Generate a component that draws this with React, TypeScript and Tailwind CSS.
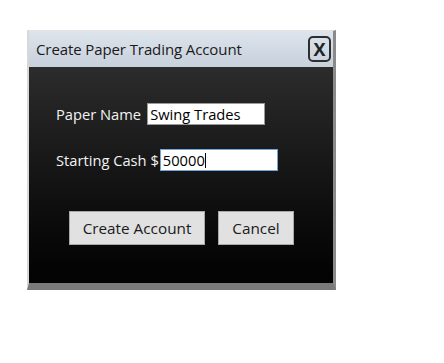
import React from 'react';

const App: React.FC = () => {
  return (
    <div className="w-[444px] h-[363px] bg-white pt-[30px] pl-[27px] font-['Open_Sans',sans-serif]">
      <div className="w-[309px] h-[260px] flex flex-col border-l-2 border-l-[#d8d8d8] border-r-[3px] border-r-[#8a8a8a] border-b-[7px] border-b-[#7a7a7a] border-t border-t-[#e2e2e2]">
        {/* title bar */}
        <div className="h-[36px] flex items-center justify-between pl-[7px] pr-[2px] bg-gradient-to-b from-[#dde4ec] to-[#c7d1dc]">
          <span className="text-[15px] text-[#1a1a1a] tracking-[-0.1px]">Create Paper Trading Account</span>
          <div className="w-[23px] h-[26px] border-2 border-[#2e2e2e] rounded-[5px] flex items-center justify-center text-[18px] font-bold text-[#222] leading-none">
            X
          </div>
        </div>

        {/* body */}
        <div className="flex-1 flex flex-col bg-gradient-to-b from-[#2c2c2c] to-[#030303] pl-[27px] pt-[36px] text-[14.7px] font-medium">
          <div className="flex items-center h-[22px]">
            <span className="text-[#f2f2f2] mr-[6px]">Paper Name</span>
            <div className="w-[118px] h-[22px] bg-white border border-[#9a9a9a] flex items-center pl-[2px] text-black">
              Swing Trades
            </div>
          </div>

          <div className="flex items-center h-[22px] mt-[24px]">
            <span className="text-[#f2f2f2] mr-[1px]">Starting Cash $</span>
            <div className="w-[118px] h-[22px] bg-white border border-[#6fa6dc] flex items-center pl-[2px] text-black">
              50000
              <span className="w-px h-[15px] bg-black" />
            </div>
          </div>

          <div className="flex mt-[40px] ml-[13px] gap-[13px] text-[15.3px]">
            <div className="w-[136px] h-[34px] bg-[#e1e1e1] border border-[#a9a9a9] flex items-center justify-center text-[#1a1a1a]">
              Create Account
            </div>
            <div className="w-[76px] h-[34px] bg-[#e1e1e1] border border-[#a9a9a9] flex items-center justify-center text-[#1a1a1a]">
              Cancel
            </div>
          </div>
        </div>
      </div>
    </div>
  );
};

export default App;
